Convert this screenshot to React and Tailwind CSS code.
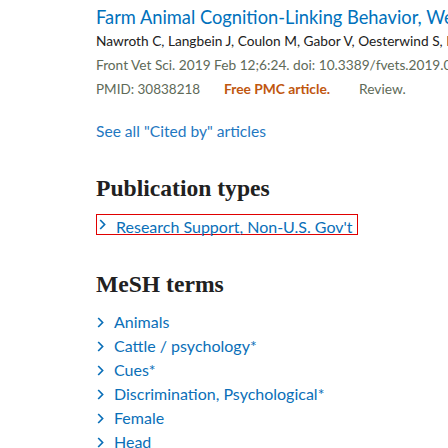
import React from "react";

const Chevron = () => (
  <svg width="7" height="11" viewBox="0 0 7 11" className="block shrink-0" aria-hidden="true">
    <path d="M1.2 1 L5.6 5.5 L1.2 10" fill="none" stroke="#0a6fb8" strokeWidth="1.7" />
  </svg>
);

const sans = { fontFamily: 'Lato, "Open Sans", sans-serif' };
const serif = { fontFamily: '"Liberation Serif", "DejaVu Serif", serif' };

export default function App() {
  const mesh = [
    "Animals",
    "Cattle / psychology*",
    "Cues*",
    "Discrimination, Psychological*",
    "Female",
    "Head",
  ];
  return (
    <div className="w-[448px] h-[448px] overflow-hidden bg-white pl-[96px] pt-[5px]" style={sans}>
      <div className="whitespace-nowrap text-[18.3px] leading-[24px] text-[#0071bc]">
        Farm Animal Cognition-Linking Behavior, Welfare and Ethics.
      </div>
      <div className="whitespace-nowrap text-[13.7px] leading-[24px] text-[#212121]">
        Nawroth C, Langbein J, Coulon M, Gabor V, Oesterwind S, Benz-Schwarzburg J, von Borell E.
      </div>
      <div className="whitespace-nowrap text-[13.7px] leading-[24px] text-[#5e6a58]">
        Front Vet Sci. 2019 Feb 12;6:24. doi: 10.3389/fvets.2019.00024. eCollection 2019.
      </div>
      <div className="flex whitespace-nowrap text-[13.5px] leading-[24px] text-[#5e6a58]">
        <span className="w-[128px]">PMID: 30838218</span>
        <span className="w-[135px] text-[13.8px] font-bold text-[#c0570f]">Free PMC article.</span>
        <span className="text-[13.8px]">Review.</span>
      </div>

      <div className="mt-[18px] whitespace-nowrap text-[15.6px] leading-[24px] text-[#1f78c1]">
        See all "Cited by" articles
      </div>

      <h2 className="mt-[31px] whitespace-nowrap text-[23.6px] font-bold leading-[28px] text-[#212121]" style={serif}>
        Publication types
      </h2>

      <div className="mt-[12px] flex">
        <div className="flex h-[21px] items-start border border-[#e00000] pr-[4px]">
          <div className="flex h-[19px] items-center gap-[10px] pl-[2px] text-[16px] leading-[23px] text-[#0a6fb8] whitespace-nowrap">
            <Chevron />
            <span className="pt-[3px]">Research Support, Non-U.S. Gov't</span>
          </div>
        </div>
      </div>

      <h2 className="mt-[35px] whitespace-nowrap text-[23.6px] font-bold leading-[28px] text-[#212121]" style={serif}>
        MeSH terms
      </h2>

      <ul className="mt-[12px] flex flex-col">
        {mesh.map((m) => (
          <li key={m} className="flex h-[24px] items-center gap-[10px] pl-[1px] whitespace-nowrap text-[16px] leading-[24px] text-[#0a6fb8]">
            <Chevron />
            <span>{m}</span>
          </li>
        ))}
      </ul>
    </div>
  );
}
